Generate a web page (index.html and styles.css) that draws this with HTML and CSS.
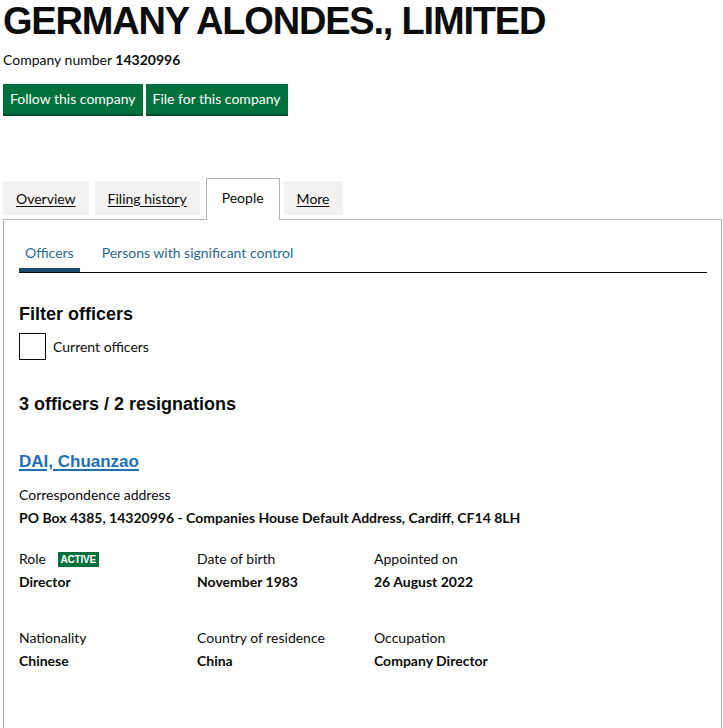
FILE: index.html
```html
<!DOCTYPE html>
<html lang="en">
<head>
<meta charset="utf-8">
<title>GERMANY ALONDES., LIMITED - People</title>
<link rel="stylesheet" href="styles.css">
</head>
<body>
<div class="page">
  <h1 class="title">GERMANY ALONDES., LIMITED</h1>
  <p class="number">Company number <strong>14320996</strong></p>
  <div class="actions">
    <a class="btn" href="#">Follow this company</a>
    <a class="btn" href="#">File for this company</a>
  </div>
  <ul class="tabs">
    <li class="tab"><a href="#">Overview</a></li>
    <li class="tab"><a href="#">Filing history</a></li>
    <li class="tab active"><span>People</span></li>
    <li class="tab"><a href="#">More</a></li>
  </ul>
  <div class="panel">
    <div class="subtabs">
      <a class="subtab current" href="#">Officers</a>
      <a class="subtab" href="#">Persons with significant control</a>
    </div>
    <h2 class="h-filter">Filter officers</h2>
    <label class="check"><span class="box"></span><span>Current officers</span></label>
    <h2 class="h-count">3 officers / 2 resignations</h2>
    <h2 class="officer"><a href="#">DAI, Chuanzao</a></h2>
    <dl class="addr">
      <dt>Correspondence address</dt>
      <dd>PO Box 4385, 14320996 - Companies House Default Address, Cardiff, CF14 8LH</dd>
    </dl>
    <div class="grid">
      <dl class="cell"><dt>Role <span class="tag">ACTIVE</span></dt><dd>Director</dd></dl>
      <dl class="cell"><dt>Date of birth</dt><dd>November 1983</dd></dl>
      <dl class="cell"><dt>Appointed on</dt><dd>26 August 2022</dd></dl>
    </div>
    <div class="grid second">
      <dl class="cell"><dt>Nationality</dt><dd>Chinese</dd></dl>
      <dl class="cell"><dt>Country of residence</dt><dd>China</dd></dl>
      <dl class="cell"><dt>Occupation</dt><dd>Company Director</dd></dl>
    </div>
  </div>
</div>
</body>
</html>
```
FILE: styles.css
```css
* { box-sizing: border-box; }
html, body { margin: 0; padding: 0; background: #fff; }
body {
  font-family: "Lato", "Liberation Sans", sans-serif;
  color: #0b0c0c;
  font-size: 14px;
}
.page { padding: 0 0 0 3px; }
.title {
  font-family: "Liberation Sans", Arial, sans-serif;
  font-weight: 700;
  font-size: 38px;
  line-height: 40px;
  margin: 0;
  padding-top: 1px;
  letter-spacing: -1.2px;
}
.number { margin: 9px 0 0; font-size: 14px; line-height: 20px; }
.number strong { font-weight: 700; }
.actions { display: flex; gap: 3px; margin-top: 14px; }
.btn {
  display: block;
  background: #00703c;
  color: #fff;
  text-decoration: none;
  font-size: 14px;
  line-height: 20px;
  padding: 5px 7px 5px;
  box-shadow: 0 2px 0 #004d29;
}
.tabs {
  list-style: none;
  margin: 64px 0 0;
  padding: 0;
  display: flex;
  align-items: flex-end;
  gap: 6px;
  position: relative;
  z-index: 1;
}
.tab {
  background: #f3f2f1;
  height: 34px;
  padding: 0 13px;
  display: flex;
  align-items: center;
  margin-bottom: 4px;
}
.tab a { color: #0b0c0c; text-decoration: underline; text-underline-offset: 2px; }
.tab.active {
  background: #fff;
  border: 1px solid #b1b4b6;
  border-bottom: 0;
  height: 42px;
  margin-bottom: -1px;
  margin-right: -2px;
  padding: 0 15px 4px;
}
.panel {
  border: 1px solid #b1b4b6;
  padding: 20px 16px 60px 15px;
  margin-right: 1px;
}
.subtabs {
  display: flex;
  gap: 16px;
  border-bottom: 1px solid #0b0c0c;
  width: 688px;
}
.subtab {
  color: #2b6a8f;
  text-decoration: none;
  padding: 3px 6px 9px;
  line-height: 20px;
}
.subtab.current { box-shadow: inset 0 -4px 0 #1d4b6e; }
.h-filter, .h-count, .officer {
  font-family: "Liberation Sans", Arial, sans-serif;
  font-weight: 700;
  font-size: 18px;
  line-height: 22px;
  margin: 0;
}
.h-filter { margin-top: 30px; }
.check { display: flex; align-items: center; gap: 7px; margin-top: 8px; }
.box { width: 27px; height: 27px; border: 1px solid #0b0c0c; display: block; }
.h-count { margin-top: 33px; }
.officer { margin-top: 36px; font-size: 17px; }
.officer a { color: #1d70b8; text-decoration: underline; text-decoration-thickness: 2px; text-underline-offset: 2px; }
dl { margin: 0; }
dt { line-height: 20px; }
dd { margin: 3px 0 0; font-weight: 700; line-height: 20px; }
.addr { margin-top: 12px; }
.grid { display: grid; grid-template-columns: 178px 177px 178px; margin-top: 21px; }
.grid.second { margin-top: 36px; }
.tag {
  display: inline-block;
  background: #00703c;
  color: #fff;
  font-family: "Liberation Sans", Arial, sans-serif;
  font-weight: 700;
  font-size: 10px;
  line-height: 15px;
  padding: 0 3px;
  margin-left: 8px;
  letter-spacing: -0.2px;
  vertical-align: 1px;
}
```
